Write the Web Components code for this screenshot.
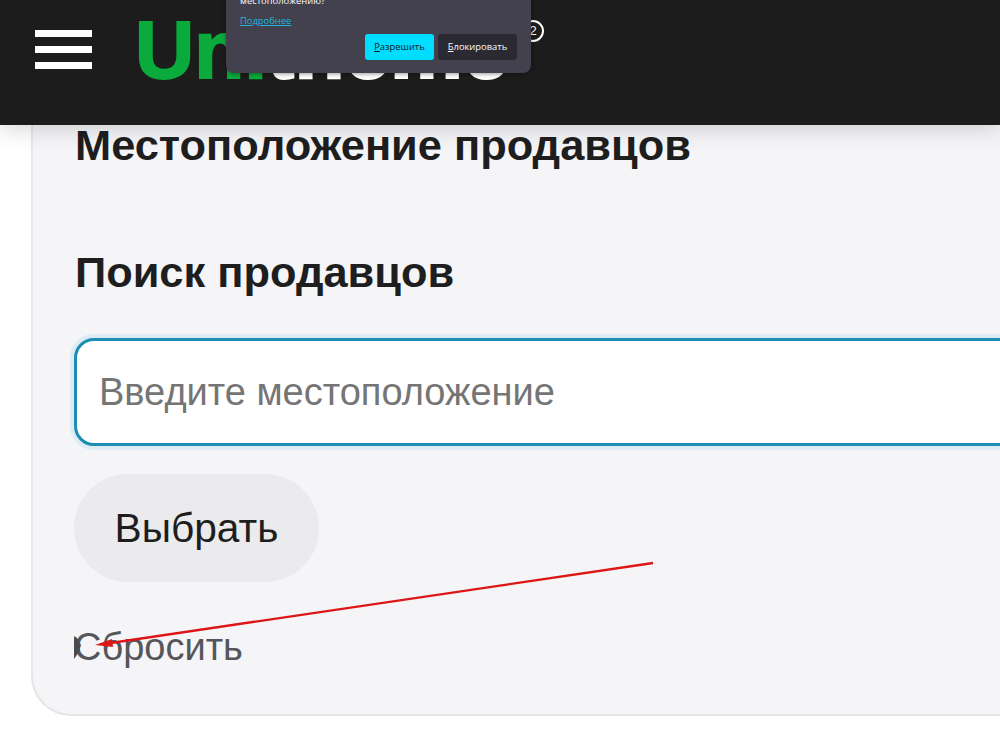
<!DOCTYPE html>
<html lang="ru">
<head>
<meta charset="utf-8">
<title>Местоположение продавцов</title>
<style>
  html, body { margin: 0; height: 741px; overflow: hidden; background: #fff; }
  body { font-family: "Liberation Sans", Arial, sans-serif; position: relative; }
</style>
</head>
<body>
<site-header>
  <permission-popup></permission-popup>
</site-header>
<store-card>
  <h-title slot="title">Местоположение продавцов</h-title>
  <h-title slot="subtitle">Поиск продавцов</h-title>
  <location-input placeholder="Введите местоположение"></location-input>
  <pill-button>Выбрать</pill-button>
  <reset-link>Сбросить</reset-link>
</store-card>
<red-arrow></red-arrow>

<script>
class SiteHeader extends HTMLElement {
  constructor() {
    super()
    this.attachShadow({ mode: 'open' })
    this.shadowRoot.innerHTML = `
      <style>
        :host {
          display: flex;
          align-items: flex-start;
          position: relative;
          z-index: 2;
          height: 125px;
          background: #1c1c1c;
          box-shadow: 0 4px 22px rgba(0, 0, 0, .16);
          overflow: hidden;
        }
        .burger {
          display: flex;
          flex-direction: column;
          gap: 9px;
          width: 57px;
          margin: 30px 0 0 35px;
        }
        .burger i { display: block; height: 7px; background: #fff; }
        .logo {
          margin: 8px 0 0 43px;
          font: bold 82px/84px "Liberation Sans", Arial, sans-serif;
          -webkit-text-stroke: 2px currentColor;
          color: #fff;
          white-space: nowrap;
        }
        .logo b { color: #0aab3c; }
        .reg {
          position: absolute;
          left: 522px;
          top: 20px;
          width: 18px;
          height: 18px;
          border: 2px solid #fff;
          border-radius: 50%;
          color: #fff;
          font: 13px/18px "Liberation Sans", Arial, sans-serif;
          text-align: center;
        }
      </style>
      <div class="burger"><i></i><i></i><i></i></div>
      <div class="logo"><b>Uni</b>theme</div>
      <span class="reg">2</span>
      <slot></slot>
    `
  }
}

class PermissionPopup extends HTMLElement {
  constructor() {
    super()
    this.attachShadow({ mode: 'open' })
    this.shadowRoot.innerHTML = `
      <style>
        :host {
          display: block;
          position: absolute;
          left: 226px;
          top: -12px;
          width: 305px;
          height: 85px;
          box-sizing: border-box;
          padding: 7px 14px 0;
          background: #42414d;
          border-radius: 0 0 8px 8px;
          color: #fbfbfe;
          font: 9.4px/12px "Open Sans", "Liberation Sans", sans-serif;
          box-shadow: 0 1px 4px rgba(0, 0, 0, .4);
        }
        a { display: block; margin-top: 8px; color: #1fb4dc; text-decoration: underline; }
        .actions {
          display: flex;
          justify-content: flex-end;
          gap: 4px;
          margin-top: 7px;
        }
        button {
          height: 26px;
          border: 0;
          border-radius: 3px;
          font: inherit;
          padding: 0;
        }
        .ok { width: 69px; background: #00ddff; color: #15141a; }
        .no { width: 79px; background: #2b2a33; color: #fbfbfe; }
        u { text-decoration: underline; }
      </style>
      <div>местоположению?</div>
      <a>Подробнее</a>
      <div class="actions">
        <button class="ok"><u>Р</u>азрешить</button>
        <button class="no"><u>Б</u>локировать</button>
      </div>
    `
  }
}

class StoreCard extends HTMLElement {
  constructor() {
    super()
    this.attachShadow({ mode: 'open' })
    this.shadowRoot.innerHTML = `
      <style>
        :host {
          display: flow-root;
          box-sizing: border-box;
          width: 1200px;
          height: 591px;
          margin-left: 31px;
          padding: 0 0 0 42px;
          background: #f5f5f8;
          border: 2px solid #e6e6e8;
          border-top: 0;
          border-right: 0;
          border-radius: 0 0 0 40px;
        }
        .heads { margin-top: -3px; }
        ::slotted([slot="subtitle"]) { margin-top: 81px; }
        .stack {
          display: flex;
          flex-direction: column;
          align-items: flex-start;
          margin-top: 43px;
        }
      </style>
      <div class="heads">
        <slot name="title"></slot>
        <slot name="subtitle"></slot>
      </div>
      <div class="stack"><slot></slot></div>
    `
  }
}

class HTitle extends HTMLElement {
  constructor() {
    super()
    this.attachShadow({ mode: 'open' })
    this.shadowRoot.innerHTML = `
      <style>
        :host {
          display: block;
          color: #1e1e1e;
          font: bold 43.4px/46px "Liberation Sans", Arial, sans-serif;
        }
      </style>
      <slot></slot>
    `
  }
}

class LocationInput extends HTMLElement {
  constructor() {
    super()
    this.attachShadow({ mode: 'open' })
    const placeholder = this.getAttribute('placeholder') || ''
    this.shadowRoot.innerHTML = `
      <style>
        :host {
          display: block;
          width: 1040px;
          height: 108px;
          box-sizing: border-box;
          margin-left: -1px;
          padding-left: 22px;
          background: #fff;
          border: 3px solid #1b8db2;
          border-radius: 20px;
          box-shadow: 0 0 0 4px #dcebf4;
          color: #757575;
          font: 38px/102px "Liberation Sans", Arial, sans-serif;
        }
      </style>
      ${placeholder}
    `
  }
}

class PillButton extends HTMLElement {
  constructor() {
    super()
    this.attachShadow({ mode: 'open' })
    this.shadowRoot.innerHTML = `
      <style>
        :host {
          display: block;
          width: 245px;
          height: 108px;
          box-sizing: border-box;
          margin: 28px 0 44px -1px;
          background: #ebebed;
          border-radius: 54px;
          color: #1e1e1e;
          font: 40.7px/108px "Liberation Sans", Arial, sans-serif;
          text-align: center;
        }
      </style>
      <slot></slot>
    `
  }
}

class ResetLink extends HTMLElement {
  constructor() {
    super()
    this.attachShadow({ mode: 'open' })
    this.shadowRoot.innerHTML = `
      <style>
        :host {
          display: block;
          margin-left: -1px;
          color: #55565a;
          font: 38px/42px "Liberation Sans", Arial, sans-serif;
        }
      </style>
      <slot></slot>
    `
  }
}

class RedArrow extends HTMLElement {
  constructor() {
    super()
    this.attachShadow({ mode: 'open' })
    this.shadowRoot.innerHTML = `
      <style>
        :host { position: absolute; left: 0; top: 0; z-index: 3; pointer-events: none; }
        svg { display: block; }
      </style>
      <svg width="1000" height="741" viewBox="0 0 1000 741">
        <path d="M74 636 77 638 81 645 79 652 74 659z" fill="#4a4b50"/>
        <path d="M653 563 104 644" stroke="#dd1515" stroke-width="2.4" fill="none"/>
        <path d="M95 645 112 639 113 647z" fill="#dd1515"/>
      </svg>
    `
  }
}

customElements.define('site-header', SiteHeader)
customElements.define('permission-popup', PermissionPopup)
customElements.define('store-card', StoreCard)
customElements.define('h-title', HTitle)
customElements.define('location-input', LocationInput)
customElements.define('pill-button', PillButton)
customElements.define('reset-link', ResetLink)
customElements.define('red-arrow', RedArrow)
</script>
</body>
</html>
